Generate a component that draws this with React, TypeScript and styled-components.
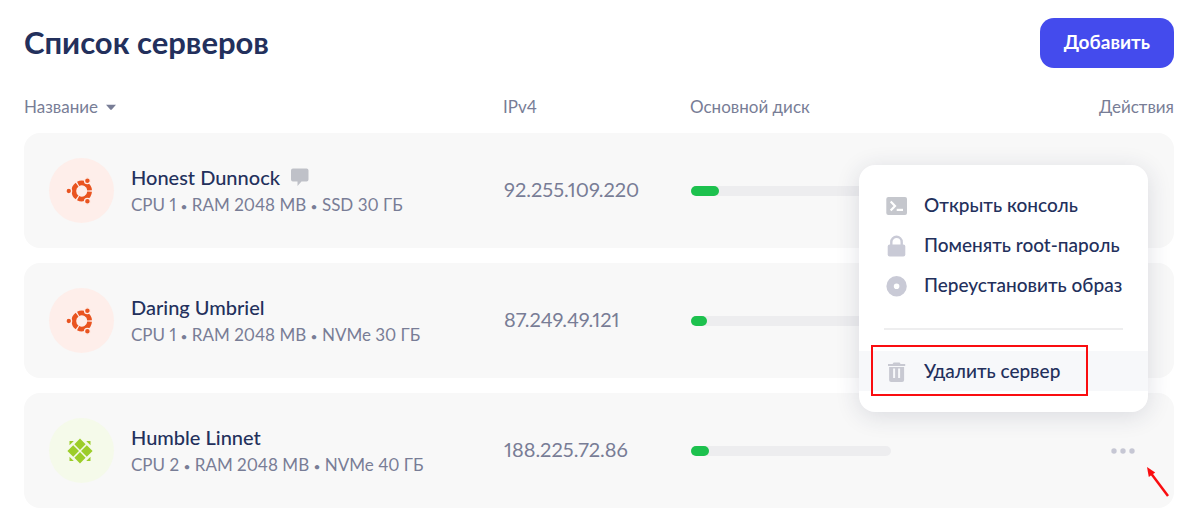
import React, { Fragment } from "react";
import styled, { createGlobalStyle } from "styled-components";

const GlobalStyle = createGlobalStyle`
  *, *::before, *::after { box-sizing: border-box; }
  body {
    margin: 0;
    background: #ffffff;
    color: #23305c;
    font-family: Lato, "Noto Sans", sans-serif;
    font-variant-numeric: proportional-nums lining-nums;
  }
  button { font: inherit; color: inherit; border: 0; background: none; padding: 0; cursor: pointer; }
`;

const Page = styled.main`
  padding: 18px 10px 0 24px;
`;

const Header = styled.header`
  display: flex;
  align-items: flex-start;
  justify-content: space-between;
  height: 50px;
`;

const Title = styled.h1`
  margin: 0;
  font-size: 31px;
  line-height: 48px;
  font-weight: 700;
`;

const AddButton = styled.button`
  && {
    height: 50px;
    padding: 0 24px 4px;
    border-radius: 14px;
    background: #444bed;
    color: #ffffff;
    font-size: 19px;
    font-weight: 700;
  }
`;

const Servers = styled.table`
  width: 100%;
  margin-top: 12px;
  border-collapse: separate;
  border-spacing: 0 15px;
  table-layout: fixed;
`;

const Col = styled.col<{ $width?: number }>`
  width: ${(p) => (p.$width ? `${p.$width}px` : "auto")};
`;

const HeadCell = styled.th<{ $end?: boolean }>`
  height: 23px;
  padding: 0;
  vertical-align: bottom;
  text-align: ${(p) => (p.$end ? "right" : "left")};
  color: #787d96;
  font-size: 17px;
  line-height: 22px;
  font-weight: 400;
`;

const SortButton = styled.button`
  && {
    display: flex;
    align-items: center;
    gap: 8px;
    line-height: 22px;
  }
`;

const Cell = styled.td`
  height: 115px;
  padding: 0;
  vertical-align: middle;
  background: #f8f8f8;
  &:first-child { padding-left: 25px; border-radius: 16px 0 0 16px; }
  &:last-child { padding-right: 26px; border-radius: 0 16px 16px 0; }
`;

const Server = styled.div`
  display: flex;
  align-items: center;
  gap: 17px;
`;

const Logo = styled.span<{ $tint: string }>`
  display: flex;
  align-items: center;
  justify-content: center;
  width: 65px;
  height: 65px;
  padding-right: 3px;
  border-radius: 50%;
  background: ${(p) => p.$tint};
`;

const Name = styled.div`
  display: flex;
  align-items: center;
  gap: 11px;
  font-size: 20px;
  line-height: 28px;
  font-weight: 500;
`;

const Specs = styled.div`
  color: #787d96;
  font-size: 17px;
  line-height: 28px;
`;

const Bullet = styled.span`
  font-size: 12px;
  line-height: 1;
`;

const Address = styled.span`
  display: block;
  padding: 0 0 3px 1px;
  color: #787d96;
  font-size: 20px;
  line-height: 28px;
`;

const Track = styled.div`
  width: 200px;
  height: 10px;
  margin-left: 1px;
  border-radius: 5px;
  background: #ededef;
`;

const Used = styled.div`
  height: 10px;
  border-radius: 5px;
  background: #1dc14e;
`;

const Actions = styled.div`
  position: relative;
  width: 50px;
  height: 50px;
  margin-left: auto;
`;

const MoreButton = styled.button`
  && {
    display: flex;
    align-items: center;
    justify-content: center;
    width: 50px;
    height: 50px;
  }
`;

const Menu = styled.div`
  position: absolute;
  right: 0;
  bottom: calc(100% + 14px);
  width: 289px;
  padding: 20px 0 21px;
  border-radius: 16px;
  background: #ffffff;
  box-shadow: 0 4px 24px rgba(35, 40, 80, 0.14);
`;

const MenuItem = styled.button<{ $active?: boolean }>`
  && {
    position: relative;
    display: flex;
    align-items: center;
    gap: 16px;
    width: 100%;
    height: 40px;
    padding: 2px 24px 0 27px;
    background: ${(p) => (p.$active ? "#f7f8fa" : "transparent")};
    font-size: 19px;
    line-height: 24px;
    font-weight: 500;
    text-align: left;
    white-space: nowrap;
  }
`;

const MenuLabel = styled.span`
  padding-bottom: 2px;
`;

const Divider = styled.hr`
  height: 2px;
  margin: 23px 25px 21px;
  border: 0;
  background: #eeeeef;
`;

const Highlight = styled.span`
  position: absolute;
  left: 12px;
  top: -6px;
  width: 217px;
  height: 51px;
  border: 2px solid #fa0d10;
`;

const Pointer = styled.svg`
  position: absolute;
  left: 47px;
  top: 39px;
`;

const Ubuntu = () => (
  <svg width="28" height="28" viewBox="0 0 28 28" aria-hidden="true">
    <g fill="none" stroke="#e95420" strokeWidth="4.7">
      <path d="M12.1 6.9A7.9 7.9 0 0 1 23.6 13.4" />
      <path d="M23.6 14.6A7.9 7.9 0 0 1 12.1 21.1" />
      <path d="M11.1 20.4A7.9 7.9 0 0 1 11.1 7.6" />
    </g>
    <g fill="#e95420" stroke="#feeeea" strokeWidth="1.3">
      <circle cx="2.8" cy="14" r="2.8" />
      <circle cx="21.4" cy="3.7" r="2.9" />
      <circle cx="21.4" cy="24.3" r="2.9" />
    </g>
  </svg>
);

const Centos = () => (
  <svg width="26" height="26" viewBox="0 0 26 26" fill="#9ccd2a" aria-hidden="true">
    <path d="M13 0.6 18.6 6.3 13 12 7.4 6.3ZM13 14 18.6 19.7 13 25.4 7.4 19.7ZM0.4 13 6.2 7.3 12 13 6.2 18.7ZM14 13 19.8 7.3 25.6 13 19.8 18.7Z" />
    <path d="M2.5 3H6.8L2.5 7.2ZM19.2 3H23.5V7.2ZM2.5 18.8 6.8 23H2.5ZM23.5 18.8V23H19.2Z" />
  </svg>
);

const Comment = () => (
  <svg width="18" height="18" viewBox="0 0 18 18" fill="#bfc1c8" aria-hidden="true">
    <path d="M2 0.5H15.5A2 2 0 0 1 17.5 2.5V11.5A2 2 0 0 1 15.5 13.5H10.5L6.5 18V13.5H2A2 2 0 0 1 0 11.5V2.5A2 2 0 0 1 2 0.5Z" />
  </svg>
);

const Caret = () => (
  <svg width="10" height="6" viewBox="0 0 10 6" fill="#787d96" aria-hidden="true">
    <path d="M0 0.8H10L5.6 5.8H4.4Z" />
  </svg>
);

const ConsoleIcon = () => (
  <svg width="22" height="22" viewBox="0 0 22 22" aria-hidden="true">
    <rect x="0.3" y="2" width="20.7" height="18" rx="2" fill="#c5c7cd" />
    <path d="M4.7 6.5 9 11 4.7 15.5" fill="none" stroke="#fff" strokeWidth="2.2" />
    <path d="M10.7 14.9H17" stroke="#fff" strokeWidth="2.2" />
  </svg>
);

const LockIcon = () => (
  <svg width="22" height="22" viewBox="0 0 22 22" aria-hidden="true">
    <rect x="1.7" y="9.5" width="17.6" height="12" rx="2" fill="#c9cad6" />
    <path d="M5.3 10V7A5.2 5.2 0 0 1 15.7 7V10" fill="none" stroke="#c9cad6" strokeWidth="2.4" />
  </svg>
);

const DiscIcon = () => (
  <svg width="22" height="22" viewBox="0 0 22 22" aria-hidden="true">
    <circle cx="10.6" cy="11.2" r="6.5" fill="none" stroke="#c9cad6" strokeWidth="7.4" />
  </svg>
);

const TrashIcon = () => (
  <svg width="22" height="22" viewBox="0 0 22 22" aria-hidden="true">
    <path
      d="M7.6 1.4H13.6L14.6 3H19.2V5H2V3H6.6Z M3.1 6H18.1V19A2 2 0 0 1 16.1 21H5.1A2 2 0 0 1 3.1 19Z M7.1 7.5V17H9.1V7.5Z M12.1 7.5V17H14.1V7.5Z"
      fill="#c8c9d2"
      fillRule="evenodd"
    />
  </svg>
);

const Dots = () => (
  <svg width="24" height="6" viewBox="0 0 24 6" fill="#c6c7d4" aria-hidden="true">
    <circle cx="3" cy="3" r="2.7" />
    <circle cx="12" cy="3" r="2.7" />
    <circle cx="21" cy="3" r="2.7" />
  </svg>
);

const servers = [
  { name: "Honest Dunnock", specs: ["CPU 1", "RAM 2048 MB", "SSD 30 ГБ"], ip: "92.255.109.220", used: 14, os: "ubuntu", note: true },
  { name: "Daring Umbriel", specs: ["CPU 1", "RAM 2048 MB", "NVMe 30 ГБ"], ip: "87.249.49.121", used: 8, os: "ubuntu" },
  { name: "Humble Linnet", specs: ["CPU 2", "RAM 2048 MB", "NVMe 40 ГБ"], ip: "188.225.72.86", used: 9, os: "centos", open: true },
];

const ActionsMenu = () => (
  <Menu role="menu">
    <MenuItem role="menuitem"><ConsoleIcon /><MenuLabel>Открыть консоль</MenuLabel></MenuItem>
    <MenuItem role="menuitem"><LockIcon /><MenuLabel>Поменять root-пароль</MenuLabel></MenuItem>
    <MenuItem role="menuitem"><DiscIcon /><MenuLabel>Переустановить образ</MenuLabel></MenuItem>
    <Divider />
    <MenuItem role="menuitem" $active>
      <TrashIcon /><MenuLabel>Удалить сервер</MenuLabel>
      <Highlight />
    </MenuItem>
  </Menu>
);

export default function App() {
  return (
    <Page>
      <GlobalStyle />
      <Header>
        <Title>Список серверов</Title>
        <AddButton>Добавить</AddButton>
      </Header>
      <Servers>
        <colgroup>
          <Col />
          <Col $width={187} />
          <Col $width={324} />
          <Col $width={160} />
        </colgroup>
        <thead>
          <tr>
            <HeadCell><SortButton>Название<Caret /></SortButton></HeadCell>
            <HeadCell>IPv4</HeadCell>
            <HeadCell>Основной диск</HeadCell>
            <HeadCell $end>Действия</HeadCell>
          </tr>
        </thead>
        <tbody>
          {servers.map((s) => (
            <tr key={s.name}>
              <Cell>
                <Server>
                  <Logo $tint={s.os === "ubuntu" ? "#feeeea" : "#f5faea"}>
                    {s.os === "ubuntu" ? <Ubuntu /> : <Centos />}
                  </Logo>
                  <div>
                    <Name>{s.name}{s.note && <Comment />}</Name>
                    <Specs>
                      {s.specs.map((part, i) => (
                        <Fragment key={part}>
                          {i > 0 && <> <Bullet>•</Bullet> </>}
                          {part}
                        </Fragment>
                      ))}
                    </Specs>
                  </div>
                </Server>
              </Cell>
              <Cell><Address>{s.ip}</Address></Cell>
              <Cell>
                <Track><Used style={{ width: `${s.used}%` }} /></Track>
              </Cell>
              <Cell>
                <Actions>
                  <MoreButton aria-label={`Действия: ${s.name}`}><Dots /></MoreButton>
                  {s.open && <ActionsMenu />}
                  {s.open && (
                    <Pointer width="26" height="34" viewBox="0 0 26 34" aria-hidden="true">
                      <path d="M5 7 23 31" stroke="#fa0d10" strokeWidth="2.5" />
                      <path d="M2 2 10.2 7.5 3.8 12Z" fill="#fa0d10" />
                    </Pointer>
                  )}
                </Actions>
              </Cell>
            </tr>
          ))}
        </tbody>
      </Servers>
    </Page>
  );
}
